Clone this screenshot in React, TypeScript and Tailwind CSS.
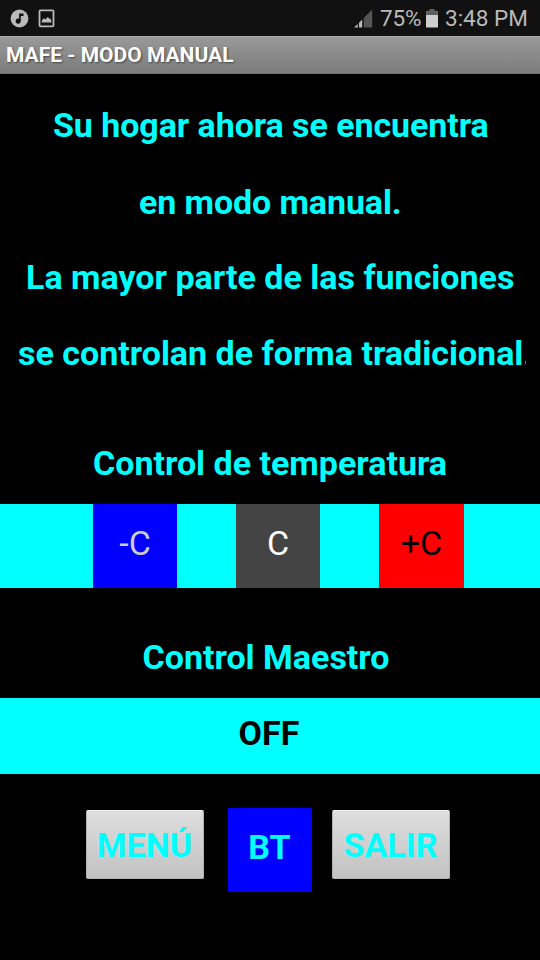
import type { ReactNode } from "react";

function StatusBar() {
  return (
    <div className="flex h-9 items-center bg-[#111111] text-[#b9b9b9]">
      <svg className="ml-[10px] size-[19px]" viewBox="0 0 19 19">
        <circle cx="9.5" cy="9.5" r="8.9" fill="#b9b9b9" />
        <path d="M9.1 4.4h4.4v2.5h-2.7v5.2a2.55 2.55 0 1 1-1.7-2.4z" fill="#111111" />
      </svg>
      <svg className="ml-[9px] h-[19px] w-[17px]" viewBox="0 0 17 19">
        <rect x="1.5" y="1.3" width="14" height="16" rx="1" fill="none" stroke="#b9b9b9" strokeWidth="1.8" />
        <path d="M3.9 13.6v-2.4l2.1-2 1.5 1.2 2.3-2.5 1.4 1.7h.9l1.2 1.6v2.4z" fill="#b9b9b9" />
      </svg>
      <div className="flex-1" />
      <svg className="h-[19px] w-[19px]" viewBox="0 0 19 19">
        <path d="M9.8 9 18.2.6v18H9.8z" fill="#555555" />
        <path d="M0 18.6 3.8 15v3.6zM5 13.8 8.2 10.6v8H5z" fill="#b9b9b9" />
      </svg>
      <span className="ml-[7px] w-[42px] whitespace-nowrap text-[22.5px] leading-9 tracking-[-0.1px]">75%</span>
      <svg className="ml-[4px] h-[19px] w-[12px]" viewBox="0 0 12 19">
        <path d="M3.5 0h5v1.8H12V7H0V1.8h3.5z" fill="#606060" />
        <path d="M0 6h12v12.5H0z" fill="#cecece" />
      </svg>
      <span className="ml-[7px] w-[95px] whitespace-nowrap text-[22.5px] leading-9">3:48 PM</span>
    </div>
  );
}

function Tile({ className, children }: { className: string; children: ReactNode }) {
  return (
    <button className={`flex h-[84px] shrink-0 justify-center text-[34px] ${className}`}>
      {children}
    </button>
  );
}

function GreyButton({ className, children }: { className: string; children: ReactNode }) {
  return (
    <button
      className={`flex h-[69px] shrink-0 justify-center rounded-[2px] border border-[#b2b2b2] border-t-[#f2f2f2] bg-linear-to-b from-[#dedede] to-[#c2c2c2] pr-[1px] text-[34px] leading-[69px] font-bold text-[#00ffff] ${className}`}
    >
      {children}
    </button>
  );
}

export default function App() {
  return (
    <main className="flex h-[960px] w-[540px] flex-col overflow-hidden bg-black font-[Roboto,sans-serif]">
      <StatusBar />
      <header className="h-[38px] border-t border-b border-t-[#aaaaaa] border-b-[#6f6f6f] bg-linear-to-b from-[#999999] to-[#7c7c7c] pl-[6px] text-[21px] leading-[36px] font-bold text-white [text-shadow:1px_1px_2px_#444]">
        MAFE - MODO MANUAL
      </header>
      <section className="mt-[13px] flex flex-col text-[34px] leading-[76px] font-bold whitespace-nowrap text-[#00ffff]">
        <p className="pl-[53px] tracking-[-0.07px]">Su hogar ahora se encuentra</p>
        <p className="-mb-px pt-px pl-[139px] tracking-[-0.1px]">en modo manual.</p>
        <p className="pl-[26px]">La mayor parte de las funciones</p>
        <p className="mr-[14px] overflow-hidden pl-[18px]">se controlan de forma tradicional.</p>
      </section>
      <h2 className="mt-[30px] h-[83px] text-center text-[34px] leading-[84px] font-bold text-[#00ffff]">
        Control de temperatura
      </h2>
      <div className="flex h-[84px] bg-[#00ffff] pl-[93px] leading-[79px]">
        <Tile className="w-[84px] bg-[#0000ff] text-[#cccccc]">-C</Tile>
        <Tile className="ml-[59px] w-[84px] bg-[#444444] text-white">C</Tile>
        <Tile className="ml-[59px] w-[85px] bg-[#ff0000] text-black">+C</Tile>
      </div>
      <h2 className="mt-[32px] h-[77.5px] pr-[8px] text-center text-[34px] leading-[75px] font-bold text-[#00ffff]">
        Control Maestro
      </h2>
      <button className="flex h-[76px] w-full justify-center bg-[#00ffff] pr-[2px] text-[34px] leading-[71px] font-bold text-black">
        OFF
      </button>
      <div className="mt-[34.5px] flex items-start pl-[86px]">
        <GreyButton className="mt-[2px] w-[118px]">MENÚ</GreyButton>
        <Tile className="ml-[24px] w-[84px] bg-[#0000ff] pr-[1px] leading-[78px] font-bold text-[#00ffff]">BT</Tile>
        <GreyButton className="mt-[2px] ml-[20px] w-[118px]">SALIR</GreyButton>
      </div>
    </main>
  );
}
